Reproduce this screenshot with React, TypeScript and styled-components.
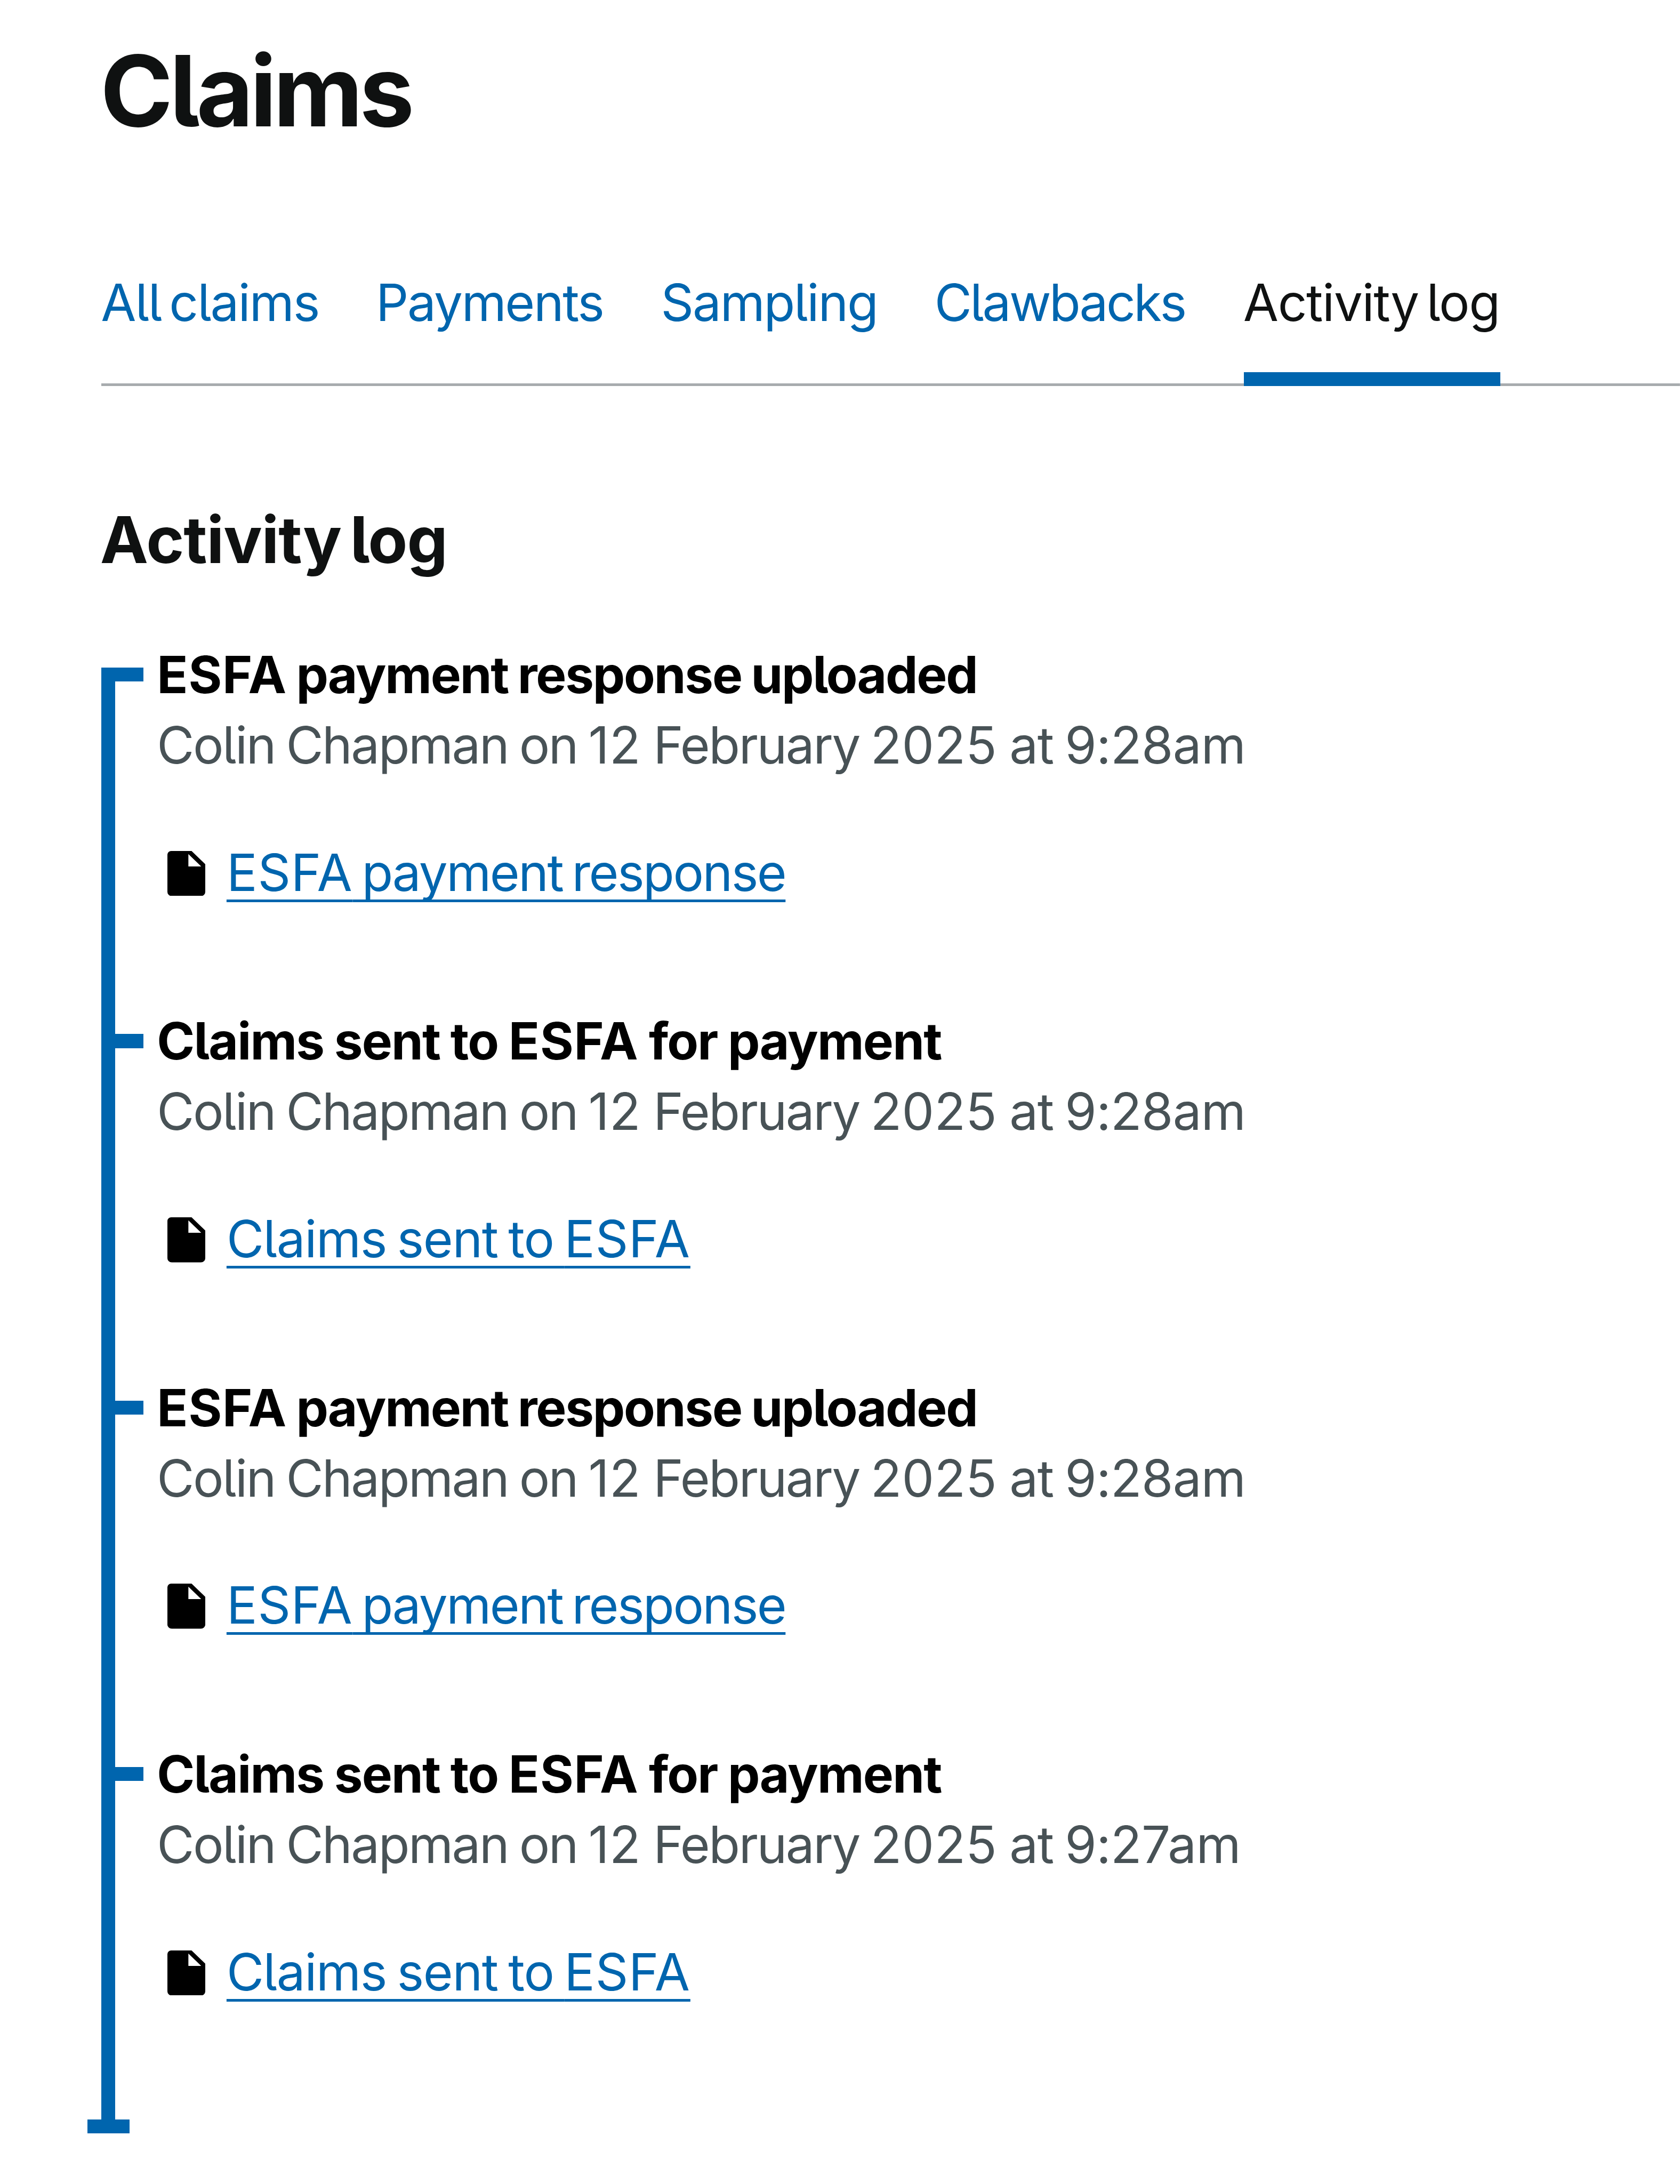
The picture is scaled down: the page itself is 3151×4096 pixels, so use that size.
import React from "react";
import styled, { createGlobalStyle } from "styled-components";

const BLUE = "#0065ae";

const GlobalStyle = createGlobalStyle`
  *, *::before, *::after { box-sizing: border-box; }
  html { background: #fff; }
  body {
    margin: 0;
    overflow: hidden;
    background: #fff;
    font-family: "Inter", "Liberation Sans", sans-serif;
    font-feature-settings: "cv05";
    color: #0f1111;
  }
`;

interface Tracking {
  $letter: number;
  $word?: number;
}

const Page = styled.main`
  width: 3151px;
  height: 4096px;
  padding: 69.8px 0 0 190.2px;
  overflow: hidden;
`;

const PageTitle = styled.h1`
  margin: 0 0 0 -2px;
  font-size: 184px;
  font-weight: 700;
  line-height: 200px;
  letter-spacing: -6.3px;
`;

const Tabs = styled.nav`
  display: flex;
  gap: 105.7px;
  height: 223px;
  margin-top: 231px;
  background: linear-gradient(#a7abae, #a7abae) bottom / 100% 5px no-repeat;
`;

const Tab = styled.a<Tracking & { $width: number; $active?: boolean }>`
  flex: none;
  width: ${(p) => p.$width}px;
  color: ${(p) => (p.$active ? "#0f1111" : BLUE)};
  border-bottom: 26.4px solid ${(p) => (p.$active ? BLUE : "transparent")};
  font-size: 96px;
  line-height: 132px;
  letter-spacing: ${(p) => p.$letter}px;
  word-spacing: ${(p) => p.$word ?? 0}px;
  text-indent: -1px;
  white-space: nowrap;
  text-decoration: none;
`;

const SectionTitle = styled.h2`
  margin: 213.6px 0 0 -2.5px;
  font-size: 121px;
  font-weight: 700;
  line-height: 150px;
  letter-spacing: -1.1px;
  word-spacing: -11px;
`;

const Timeline = styled.ol`
  list-style: none;
  margin: 164.7px 0 0;
  padding: 0;
  border-left: 26.4px solid ${BLUE};
`;

const Event = styled.li<{ $last?: boolean }>`
  display: flex;
  gap: 26.3px;
  height: ${(p) => (p.$last ? 660.9 : 687.3)}px;
`;

const Tick = styled.span`
  flex: none;
  width: 52.8px;
  height: 26.4px;
  background: ${BLUE};
`;

const EventBody = styled.div`
  margin-top: -53px;
`;

const EventTitle = styled.h3<Tracking>`
  margin: 0 0 0 -1px;
  color: #000;
  font-size: 96px;
  font-weight: 700;
  line-height: 132px;
  letter-spacing: ${(p) => p.$letter}px;
  word-spacing: ${(p) => p.$word ?? 0}px;
  white-space: nowrap;
`;

const Byline = styled.p`
  margin: 0 0 0 -1px;
  color: #485256;
  font-size: 96px;
  line-height: 132px;
  word-spacing: -4px;
  white-space: nowrap;
`;

const Run = styled.span<{ $letter: number }>`
  letter-spacing: ${(p) => p.$letter}px;
`;

const Attachment = styled.div`
  display: flex;
  align-items: flex-start;
  gap: 40px;
  margin-top: 106.7px;
  padding-left: 18.6px;
`;

const FileIcon = styled.svg`
  flex: none;
  display: block;
  width: 71px;
  height: 84.6px;
  margin-top: 26px;
`;

const FileLink = styled.a<Tracking>`
  color: ${BLUE};
  font-size: 96px;
  line-height: 132px;
  letter-spacing: ${(p) => p.$letter}px;
  word-spacing: ${(p) => p.$word ?? 0}px;
  white-space: nowrap;
  text-decoration: underline;
  text-decoration-thickness: 5px;
  text-decoration-skip-ink: none;
  text-underline-offset: 15.5px;
`;

const EndCap = styled.div`
  width: 79.3px;
  height: 26.4px;
  margin-left: -26.4px;
  background: ${BLUE};
`;

const tabs = [
  { label: "All claims", width: 410.2, letter: -2, word: -10 },
  { label: "Payments", width: 428.8, letter: -2.4 },
  { label: "Sampling", width: 407.4, letter: -2.2 },
  { label: "Clawbacks", width: 473.5, letter: -3.4 },
  { label: "Activity log", width: 481, letter: -1.4, word: -11, active: true },
];

const uploaded = {
  title: "ESFA payment response uploaded",
  titleTracking: { $letter: -2.2, $word: -3 },
  file: "ESFA payment response",
  fileTracking: { $letter: -2.5, $word: -7.5 },
};

const sent = {
  title: "Claims sent to ESFA for payment",
  titleTracking: { $letter: -1.8, $word: -1.5 },
  file: "Claims sent to ESFA",
  fileTracking: { $letter: -1.4, $word: -6 },
};

const events = [
  { ...uploaded, time: "9:28am" },
  { ...sent, time: "9:28am" },
  { ...uploaded, time: "9:28am" },
  { ...sent, time: "9:27am" },
];

/* Capitals are set a little looser than the lower-case words around them. */
const Spaced = ({ text }: { text: string }) => (
  <>
    {text.split(/(ESFA)/).map((part, i) =>
      part === "ESFA" ? (
        <Run key={i} $letter={0.8}>
          {part}
        </Run>
      ) : (
        part
      )
    )}
  </>
);

const DocumentIcon = () => (
  <FileIcon viewBox="0 0 13 16" preserveAspectRatio="none" aria-hidden="true">
    <path
      fillRule="evenodd"
      d="M1.3 0H8.3L13 4.7V14.5A1.5 1.5 0 0 1 11.5 16h-10A1.5 1.5 0 0 1 0 14.5V1.3A1.3 1.3 0 0 1 1.3 0ZM7.2 1.1V5.5H11.6Z"
    />
  </FileIcon>
);

export default function App() {
  return (
    <>
      <GlobalStyle />
      <Page>
        <PageTitle>Claims</PageTitle>
        <Tabs>
          {tabs.map((t) => (
            <Tab key={t.label} $width={t.width} $letter={t.letter} $word={t.word} $active={t.active}>
              {t.label}
            </Tab>
          ))}
        </Tabs>
        <SectionTitle>Activity log</SectionTitle>
        <Timeline>
          {events.map((e, i) => (
            <Event key={i} $last={i === events.length - 1}>
              <Tick />
              <EventBody>
                <EventTitle {...e.titleTracking}>
                  <Spaced text={e.title} />
                </EventTitle>
                <Byline>
                  <Run $letter={-2.5}>Colin Chapman on </Run>
                  <Run $letter={0.4}>12 </Run>
                  <Run $letter={-2.4}>February </Run>
                  <Run $letter={0.3}>2025 </Run>
                  <Run $letter={-1.4}>at </Run>
                  <Run $letter={-0.7}>{e.time}</Run>
                </Byline>
                <Attachment>
                  <DocumentIcon />
                  <FileLink {...e.fileTracking}>
                    <Spaced text={e.file} />
                  </FileLink>
                </Attachment>
              </EventBody>
            </Event>
          ))}
        </Timeline>
        <EndCap />
      </Page>
    </>
  );
}
